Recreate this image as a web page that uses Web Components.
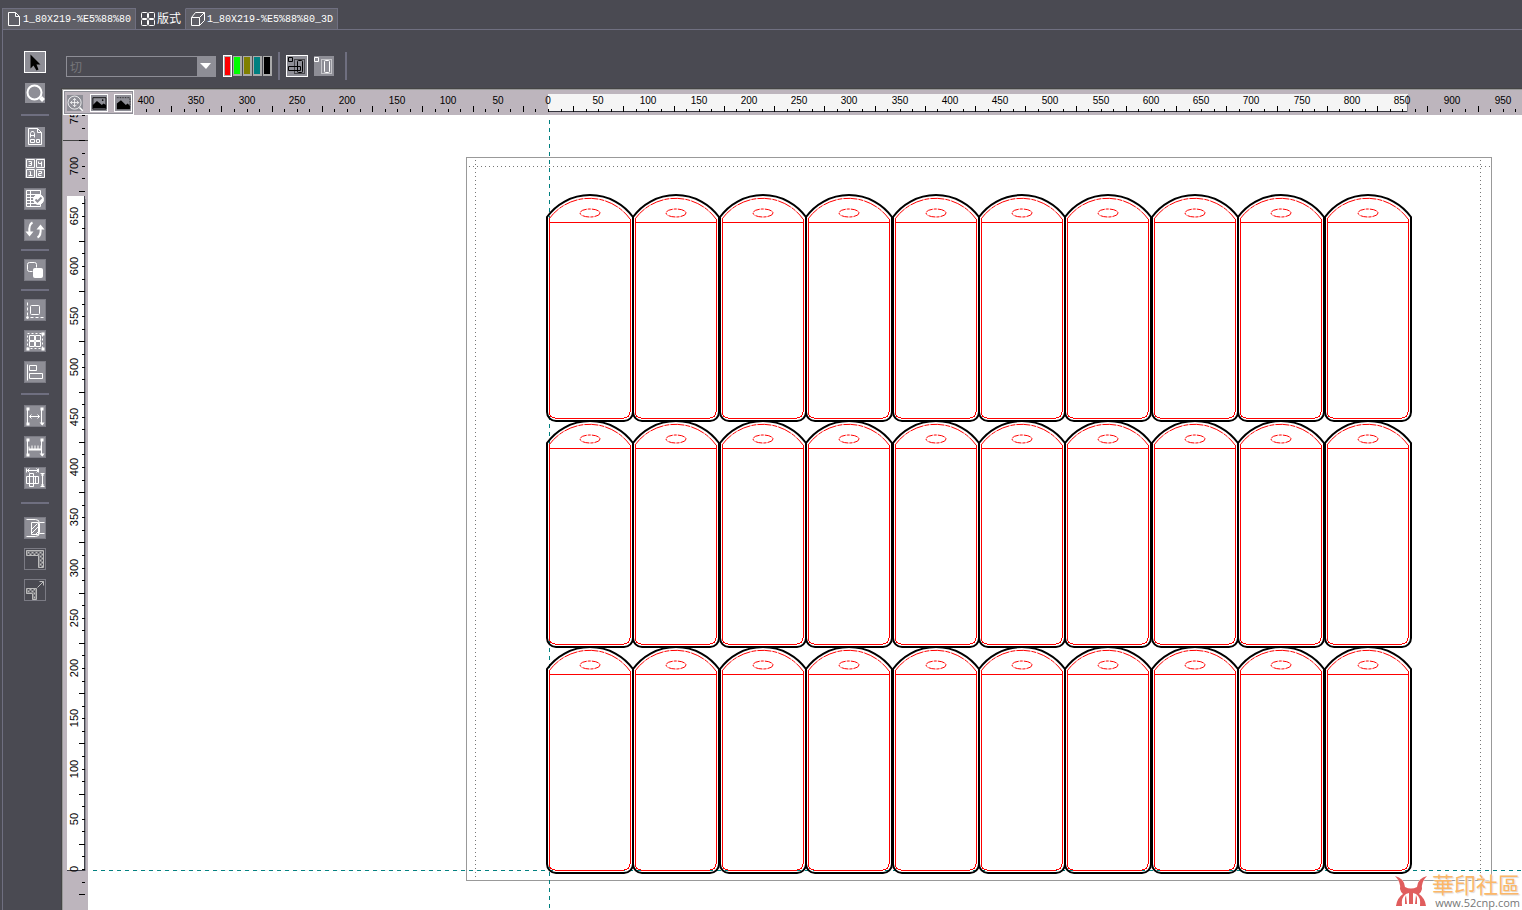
<!DOCTYPE html>
<html lang="zh">
<head>
<meta charset="utf-8">
<title>版式</title>
<style>
  :root {
    --chrome: #4a4a52;
    --chrome-light: #5f5f67;
    --line: #6f6f80;
    --icon-back: #8e8e96;
    --ruler: #bdb5bd;
  }

  body {
    margin: 0;
    background: var(--chrome);
    font-family: "Liberation Mono", "Noto Sans CJK SC", monospace;
  }
</style>
</head>
<body>
<layout-app></layout-app>

<script>
const ICONS = {
  page: '<path d="M0 0h7l4 4v9H0zM7 0v4h4"/>',
  grid: '<rect x="0" y="0" width="6" height="6" rx="1"/><rect x="7" y="0" width="6" height="6" rx="1"/><rect x="0" y="7" width="6" height="6" rx="1"/><rect x="7" y="7" width="6" height="6" rx="1"/>',
  cube: '<path d="M0 5h8v8H0zM0 5l4-5h9l-5 5M13 0v8l-5 5"/>',
  pointer: '<path d="M6 3v14l3-3 3 5 2-1-2-5h4z" fill="#000" stroke="none"/>',
  lens: '<circle cx="10" cy="10" r="7" stroke-width="2"/><path d="M16 15l3 3" stroke-width="4"/>',
  textpage: '<path d="M4 2h9l4 4v12H4zM13 2v4h4M6 11V7l1-2h2l1 2v4M6 9h4M6 13h4v3H6zM12 13h3v3h-3z"/>',
  numbers: '<path d="M2 2h8v8H2zM12 2h8v8h-8zM2 12h8v8H2zM12 12h8v8h-8z"/><path d="M4 4h3v4H4M5 6h2M14 4v2h3M17 4v5M6 14v4M5 14h1M4 18h4M14 14h3v2h-3v2h3"/>',
  check: '<path d="M2 2h14v16H2zM2 6h14M2 9h14M2 12h14M2 15h14M6 2v16"/><circle cx="14" cy="11" r="5" fill="#fff"/><path d="M11 11l2 2 4-4" stroke="#8e8e96" stroke-width="2"/>',
  rotate: '<path d="M8 3q-4 2-3 10M13 18q4-2 3-10" stroke-width="2"/><path d="M1 12h8l-4 5zM12 10h8l-4-5z" fill="#fff" stroke="none"/>',
  order: '<rect x="3" y="3" width="9" height="9" rx="2"/><rect x="8" y="8" width="11" height="11" rx="2" fill="#8e8e96" stroke="none"/><rect x="9" y="9" width="9" height="9" rx="1" fill="#fff"/>',
  origin: '<path d="M3 3v13M6 18h13" stroke-dasharray="3 2"/><circle cx="3" cy="18" r="1" fill="#fff"/><rect x="6" y="6" width="9" height="9" rx="1"/>',
  group: '<path d="M3 3h15v15H3z" stroke-dasharray="2 2"/><path d="M5 5h5v5H5zM11 5h5v5h-5zM5 11h5v5H5zM11 11h5v5h-5z"/><path d="M17 2h3v3h-3zM2 17h3v3H2zM17 17h3v3h-3z" fill="#fff" stroke="none"/>',
  align: '<path d="M3 3v16M5 4h7v5H5zM5 12h13v5H5z"/>',
  distance: '<path d="M3 3v16M17 3v16M5 11h10M7 9l-2 2 2 2M13 9l2 2-2 2"/><path d="M2 2h3v3H2zM16 2h3v3h-3zM2 17h3v3H2zM15 17h5l-2 3z" fill="#fff" stroke="none"/>',
  measure: '<path d="M3 3v16M17 3v16"/><path d="M4 10h1v2h2V9h1v3h2V9h1v3h2V9h1v3h2V9h1v5H4zM2 2h3v3H2zM16 2h3v3h-3zM2 17h3v3H2zM15 17h5l-2 3z" fill="#fff" stroke="none"/>',
  bounds: '<path d="M2 1v4M14 1v4M2 3h12M5 1L3 3l2 2M12 1l2 2-2 2M16 6h4M16 19h4M18 6v13M17 8l1-2 1 2M17 17l1 2 1-2M2 9h12v7H2zM5 6h4v13H5zM11 9v7"/>',
  bridge: '<path d="M2 2h9q4 0 4 4v9q0 4-4 4H2"/><path d="M7 5h7v12H7zM7 12l6-6M7 16l7-7M11 17l3-3M15 5h5M15 16h5"/>',
  corner: '<path d="M2 2h17v17h-5V7H2z" fill="url(#hatch)"/>',
  outward: '<path d="M2 9h10v11H8v-6H2z" fill="url(#hatch)"/><path d="M13 8l6-6M15 2h4v4"/>',
  arrange: '<path d="M2 2h4v4H2zM2 11h12v4H2z"/><path d="M8 4h10v14H8z" stroke-dasharray="1 1"/><rect x="11" y="5" width="5" height="12" rx="1"/>',
  place: '<path d="M1 2h4v4H1z"/><path d="M8 4h10v14H8z" stroke-dasharray="1 1"/><rect x="11" y="5" width="5" height="12" rx="1"/>',
  fit: '<circle cx="10" cy="10" r="8"/><path d="M16 16l4 4" stroke-width="2"/><path d="M5 10h10M10 5v10M7 8l-2 2 2 2M13 8l2 2-2 2M8 7l2-2 2 2M8 13l2 2 2-2"/>',
  image: '<path d="M3 4h16v14H3z" stroke="#000"/><path d="M3 17v-4l5-5 6 5 2-2 3 2v4z" fill="#000" stroke="none"/><circle cx="15" cy="7" r="1" fill="#000" stroke="none"/>',
  region: '<path d="M3 4h16v14" stroke-dasharray="1 1"/><path d="M3 18v-7l5-4 6 6 2-2 3 3v4z" fill="#000" stroke="none"/>'
};

const icon = (name, size = 22) => `
  <svg width="${size}" height="${size}" viewBox="0 0 ${size} ${size}" fill="none" stroke="currentColor" aria-hidden="true">
    <defs>
      <pattern id="hatch" width="4" height="4" patternUnits="userSpaceOnUse">
        <path d="M0 0l4 4M4 0L0 4" stroke="#bbb"/>
      </pattern>
    </defs>
    <g transform="translate(.5 .5)">${ICONS[name]}</g>
  </svg>`;

customElements.define(
  'doc-tab',
  class extends HTMLElement {
    constructor() {
      super();
      this.attachShadow({ mode: 'open' });
      this.shadowRoot.innerHTML = `
        <style>
          :host {
            display: block;
            border: 1px solid var(--line);
            border-left-width: 0;
            border-bottom: 0;
            background: var(--chrome-light);
          }

          :host([first]) {
            border-left-width: 1px;
          }

          :host([active]) {
            background: var(--chrome);
            border-top-color: var(--chrome);
            margin-bottom: -1px;
            padding-bottom: 1px;
          }

          button {
            display: flex;
            align-items: center;
            gap: 1px;
            height: 20px;
            padding: 1px 4px 0 5px;
            border: 0;
            background: none;
            color: #fff;
            font: 10px/18px "Liberation Mono", "Noto Sans CJK SC", monospace;
            white-space: nowrap;
          }

          :host([first]) button {
            gap: 0;
          }

          :host([active]) button {
            font-size: 12px;
          }
        </style>
        <button role="tab">${icon(this.getAttribute('icon'), 15)}<slot></slot></button>
      `;
    }
  }
);

customElements.define(
  'tool-button',
  class extends HTMLElement {
    constructor() {
      super();
      this.attachShadow({ mode: 'open' });
      this.shadowRoot.innerHTML = `
        <style>
          :host {
            --size: 22px;
            display: block;
            width: var(--size);
            height: var(--size);
          }

          :host([small]) {
            --size: 18px;
          }

          button {
            display: block;
            box-sizing: border-box;
            width: var(--size);
            height: var(--size);
            padding: 0;
            border: 1px solid #7b7b84;
            background: var(--icon-back);
            color: #fff;
          }

          svg {
            display: block;
            width: var(--size);
            height: var(--size);
            margin: -1px;
          }

          :host([borderless]) button {
            border-color: var(--button-edge, var(--chrome));
          }

          :host([selected]) button {
            border-color: #fff;
          }

          :host([dark]) button {
            color: #000;
          }

          :host([off]) button {
            background: var(--chrome);
            color: #bbb;
          }
        </style>
        <button aria-label="${this.getAttribute('label')}">${icon(this.getAttribute('icon'))}</button>
      `;
    }
  }
);

customElements.define(
  'tool-rule',
  class extends HTMLElement {
    constructor() {
      super();
      this.attachShadow({ mode: 'open' });
      this.shadowRoot.innerHTML = `
        <style>
          :host {
            display: grid;
            align-content: center;
            width: 28px;
            height: 22px;
          }

          :host([size="sm"]) {
            height: 18px;
          }

          :host([size="lg"]) {
            height: 28px;
          }

          :host([upright]) {
            width: 2px;
            height: 28px;
            align-content: stretch;
          }

          div {
            min-height: 2px;
            background: var(--line);
          }
        </style>
        <div></div>
      `;
    }
  }
);

customElements.define(
  'tool-box',
  class extends HTMLElement {
    constructor() {
      super();
      this.attachShadow({ mode: 'open' });
      this.shadowRoot.innerHTML = `
        <style>
          :host {
            display: flex;
            flex-direction: column;
            align-items: center;
            width: 28px;
            padding: 21px 12px 0 18px;
          }

          section {
            display: grid;
            gap: 9px;
          }
        </style>
        <section>
          <tool-button icon="pointer" label="选择" selected></tool-button>
          <tool-button icon="lens" label="缩放" borderless></tool-button>
        </section>
        <tool-rule></tool-rule>
        <section>
          <tool-button icon="textpage" label="页面" borderless></tool-button>
          <tool-button icon="numbers" label="编号" borderless></tool-button>
          <tool-button icon="check" label="检查"></tool-button>
          <tool-button icon="rotate" label="旋转"></tool-button>
        </section>
        <tool-rule size="sm"></tool-rule>
        <section>
          <tool-button icon="order" label="顺序"></tool-button>
        </section>
        <tool-rule size="sm"></tool-rule>
        <section>
          <tool-button icon="origin" label="原点"></tool-button>
          <tool-button icon="group" label="组合"></tool-button>
          <tool-button icon="align" label="对齐"></tool-button>
        </section>
        <tool-rule></tool-rule>
        <section>
          <tool-button icon="distance" label="距离"></tool-button>
          <tool-button icon="measure" label="测量"></tool-button>
          <tool-button icon="bounds" label="边界"></tool-button>
        </section>
        <tool-rule size="lg"></tool-rule>
        <section>
          <tool-button icon="bridge" label="桥接"></tool-button>
          <tool-button icon="corner" label="角" off></tool-button>
          <tool-button icon="outward" label="延伸" off></tool-button>
        </section>
      `;
    }
  }
);

customElements.define(
  'line-select',
  class extends HTMLElement {
    constructor() {
      super();
      this.attachShadow({ mode: 'open' });
      this.shadowRoot.innerHTML = `
        <style>
          :host {
            display: grid;
            width: 150px;
            height: 21px;
          }

          select,
          svg {
            grid-area: 1 / 1;
          }

          select {
            appearance: none;
            box-sizing: border-box;
            width: 150px;
            height: 21px;
            padding: 0 20px 0 3px;
            border: 1px solid var(--icon-back);
            border-radius: 0;
            background: var(--chrome);
            color: #77777b;
            opacity: 1;
            font: 12px/19px "Noto Sans CJK SC", sans-serif;
          }

          svg {
            justify-self: end;
            pointer-events: none;
          }
        </style>
        <select aria-label="线型" disabled><option>切</option></select>
        <svg width="19" height="21"><path d="M0 0h19v21H0z" fill="#8e8e96"/><path d="M3 7h11l-5 6z" fill="#fff"/></svg>
      `;
    }
  }
);

customElements.define(
  'color-swatch',
  class extends HTMLElement {
    constructor() {
      super();
      this.attachShadow({ mode: 'open' });
      this.shadowRoot.innerHTML = `
        <style>
          :host {
            display: block;
          }

          button {
            display: block;
            box-sizing: border-box;
            width: 9px;
            height: 20px;
            padding: 0;
            border: 1px solid #aaa;
            border-width: 1px 2px 2px 1px;
            background: ${this.getAttribute('color')};
          }

          :host([selected]) button {
            border: 1px solid #fff;
            height: 22px;
            box-shadow: inset 0 0 0 1px #aaa;
          }
        </style>
        <button aria-label="${this.getAttribute('label')}"></button>
      `;
    }
  }
);

customElements.define(
  'option-bar',
  class extends HTMLElement {
    constructor() {
      super();
      this.attachShadow({ mode: 'open' });
      this.shadowRoot.innerHTML = `
        <style>
          :host {
            display: flex;
            align-items: center;
            gap: 6px;
            height: 28px;
            padding: 22px 5px 8px;
          }

          section {
            display: flex;
            align-items: center;
            gap: 1px;
            padding-left: 1px;
          }

          .modes {
            gap: 5px;
            padding: 0 4px 0 0;
          }
        </style>
        <line-select></line-select>
        <section>
          <color-swatch color="#f00" label="红" selected></color-swatch>
          <color-swatch color="#0f0" label="绿"></color-swatch>
          <color-swatch color="#808000" label="橄榄"></color-swatch>
          <color-swatch color="#008080" label="青"></color-swatch>
          <color-swatch color="#000" label="黑"></color-swatch>
        </section>
        <tool-rule upright></tool-rule>
        <section class="modes">
          <tool-button icon="arrange" label="排列" selected dark></tool-button>
          <tool-button icon="place" label="放置" borderless></tool-button>
        </section>
        <tool-rule upright></tool-rule>
      `;
    }
  }
);

// Both rulers run at 201 px per 200 mm, with a tick each 12.5 mm.
const toPixels = (mm) => Math.round(mm * 1.005);

customElements.define(
  'mm-ruler',
  class extends HTMLElement {
    constructor() {
      super();
      this.attachShadow({ mode: 'open' });
      const upright = this.hasAttribute('upright');
      const origin = Number(this.getAttribute('origin'));
      const from = Number(this.getAttribute('from'));
      const to = Number(this.getAttribute('to'));
      const marks = [];

      for (let mm = from; mm <= to; mm += 12.5) {
        const at = upright ? origin - toPixels(mm) : origin + toPixels(mm);
        const size = mm % 50 !== 0 && mm % 25 === 0 ? 6 : 3;
        marks.push(
          upright
            ? `<rect x="${22 - size}" y="${at - 1}" width="${size}" height="1"/>`
            : `<rect x="${at}" y="${22 - size}" width="1" height="${size}"/>`
        );
        if (mm % 50 === 0) {
          marks.push(
            upright
              ? `<text transform="translate(15 ${at - 1}) rotate(-90)">${Math.abs(mm)}</text>`
              : `<text x="${at}" y="14">${Math.abs(mm)}</text>`
          );
        }
      }

      const extent = upright
        ? '<path d="M4 81h18v674H4z" fill="#fff"/><path d="M21 81h1v675H4v-1h17z" fill="#43434c"/><path d="M22 84h1v672H22z" fill="#8e8e96"/><path d="M0 25h26v1H0z" fill="#444"/><path d="M16 25h6v1h-6z" fill="#fff"/>'
        : '<path d="M414 4h860v18H414z" fill="#f5f5f5"/><path d="M414 21h859v1H414z" fill="#33333c"/><path d="M1273 5h1v17h-1z" fill="#8e8e96"/>';

      this.shadowRoot.innerHTML = `
        <style>
          :host {
            display: block;
            overflow: hidden;
            background: var(--ruler);
          }

          svg {
            display: block;
            width: 100%;
            height: 100%;
          }

          text {
            font: 10px "Liberation Sans", sans-serif;
            text-anchor: middle;
          }

          :host([upright]) text {
            font-size: 11px;
          }
        </style>
        <svg>${extent}${marks.join('')}</svg>
      `;
    }
  }
);

customElements.define(
  'view-corner',
  class extends HTMLElement {
    constructor() {
      super();
      this.attachShadow({ mode: 'open' });
      this.shadowRoot.innerHTML = `
        <style>
          :host {
            box-sizing: border-box;
            display: flex;
            align-items: center;
            gap: 6px;
            width: 71px;
            height: 25px;
            padding-left: 2px;
            border: 1px solid #fff;
            outline: 1px solid var(--icon-back);
            outline-offset: -2px;
            background: var(--ruler);
            --button-edge: var(--ruler);
          }
        </style>
        <tool-button icon="fit" label="适合窗口" small borderless></tool-button>
        <tool-button icon="image" label="图像" small selected dark></tool-button>
        <tool-button icon="region" label="区域" small selected dark></tool-button>
      `;
    }
  }
);

customElements.define(
  'site-mark',
  class extends HTMLElement {
    constructor() {
      super();
      this.attachShadow({ mode: 'open' });
      this.shadowRoot.innerHTML = `
        <style>
          :host {
            display: flex;
            gap: 4px;
            align-items: center;
          }

          div {
            display: grid;
            gap: 3px;
            justify-items: end;
          }

          b {
            color: #fbb768;
            font: 400 22px/22px "Noto Sans CJK TC", sans-serif;
            text-shadow: 1px 1px 1px #ddd, -1px -1px 1px #fff;
          }

          span {
            color: #777;
            font: 11px/12px "Open Sans", sans-serif;
            text-shadow: 0 0 2px #fff;
          }
        </style>
        <svg width="34" height="34" viewBox="0 0 34 34" fill="#e05d5d" stroke="#fff" paint-order="stroke" aria-hidden="true">
          <path d="M1 2Q10 4 11 13Q17 16 23 13Q24 4 33 2Q27 8 28 15Q27 19 25 20Q31 24 32 32H26Q27 23 22 20L19 19V30H15V19L12 20Q7 23 8 32H2Q3 24 9 20Q7 19 6 15Q7 8 1 2z"/>
          <path d="M11 24l1-3 1 9h-2zM23 24l-1-3-1 9h2z" stroke="none"/>
        </svg>
        <div><b>華印社區</b><span>www.52cnp.com</span></div>
      `;
    }
  }
);

customElements.define(
  'sheet-view',
  class extends HTMLElement {
    constructor() {
      super();
      this.attachShadow({ mode: 'open' });
      const labels = [];

      for (let row = 2; row >= 0; row--) {
        for (let column = 0; column < 10; column++) {
          const x = Math.round(column * 86.4) - 2;
          const y = 3 - row * 226;
          labels.push(`
            <g transform="translate(${x} ${y})">
              <path class="cut" d="M0-204A53 53 0 0 1 86-204V-9a9 9 0 0 1-9 9H9a9 9 0 0 1-9-9z"/>
              <path class="bleed" d="M2-202V-9a6 6 0 0 0 6 6H77a6 6 0 0 0 6-6V-202M2-199H83"/>
              <path class="bleed curve" d="M2-202A50 50 0 0 1 83-202" stroke-dasharray="14 1 5 1"/>
              <ellipse class="bleed curve" cx="43" cy="-208" rx="10" ry="4" stroke-dasharray="7 1 3 1"/>
            </g>`);
        }
      }

      this.shadowRoot.innerHTML = `
        <style>
          :host {
            display: block;
            position: relative;
            overflow: hidden;
            background: #fff;
          }

          svg {
            display: block;
            width: 100%;
            height: 100%;
            fill: none;
          }

          .cut {
            stroke: #000;
            stroke-width: 2;
          }

          .bleed {
            stroke: #f00;
            shape-rendering: crispEdges;
          }

          .curve {
            shape-rendering: geometricPrecision;
          }

          .sheet {
            stroke: #999;
            shape-rendering: crispEdges;
          }

          .margin {
            stroke: #777;
            stroke-dasharray: 1 3;
            shape-rendering: crispEdges;
          }

          .guide {
            stroke: #008080;
            stroke-dasharray: 4 4;
            shape-rendering: crispEdges;
          }

          site-mark {
            position: absolute;
            right: 2px;
            bottom: 1px;
          }
        </style>
        <svg>
          <g transform="translate(461 755)">
            <path class="sheet" d="M-83-713H942V10H-83z"/>
            <path class="margin" d="M-80-704H941M-74-710V8M931-710V8"/>
            <path class="guide" d="M0-750V38M-456 0H4000"/>
            ${labels.join('')}
          </g>
        </svg>
        <site-mark></site-mark>
      `;
    }
  }
);

customElements.define(
  'layout-app',
  class extends HTMLElement {
    constructor() {
      super();
      this.attachShadow({ mode: 'open' });
      this.shadowRoot.innerHTML = `
        <style>
          :host {
            box-sizing: border-box;
            display: flex;
            flex-direction: column;
            min-height: 100vh;
            padding: 8px 0 0 2px;
          }

          nav {
            display: flex;
          }

          main {
            flex: 1;
            display: grid;
            grid-template-columns: auto 1fr;
            border: 1px solid var(--line);
            border-width: 1px 0 0 1px;
          }

          .column {
            display: flex;
            flex-direction: column;
            min-width: 0;
          }

          .work {
            flex: 1;
            display: grid;
            grid-template-columns: 25px 46px 1fr;
            grid-template-rows: 25px 1fr;
            border: 2px groove #999;
            border-width: 2px 0 0 2px;
          }

          view-corner {
            grid-column: 1 / 3;
          }

          sheet-view {
            grid-column: 2 / 4;
          }
        </style>
        <nav role="tablist">
          <doc-tab icon="page" first>1_80X219-%E5%88%80</doc-tab>
          <doc-tab icon="grid" active>版式</doc-tab>
          <doc-tab icon="cube">1_80X219-%E5%88%80_3D</doc-tab>
        </nav>
        <main>
          <tool-box></tool-box>
          <div class="column">
            <option-bar></option-bar>
            <div class="work">
              <view-corner></view-corner>
              <mm-ruler origin="414" from="-400" to="962.5"></mm-ruler>
              <mm-ruler upright origin="755" from="-25" to="750"></mm-ruler>
              <sheet-view></sheet-view>
            </div>
          </div>
        </main>
      `;
    }
  }
);
</script>
</body>
</html>
